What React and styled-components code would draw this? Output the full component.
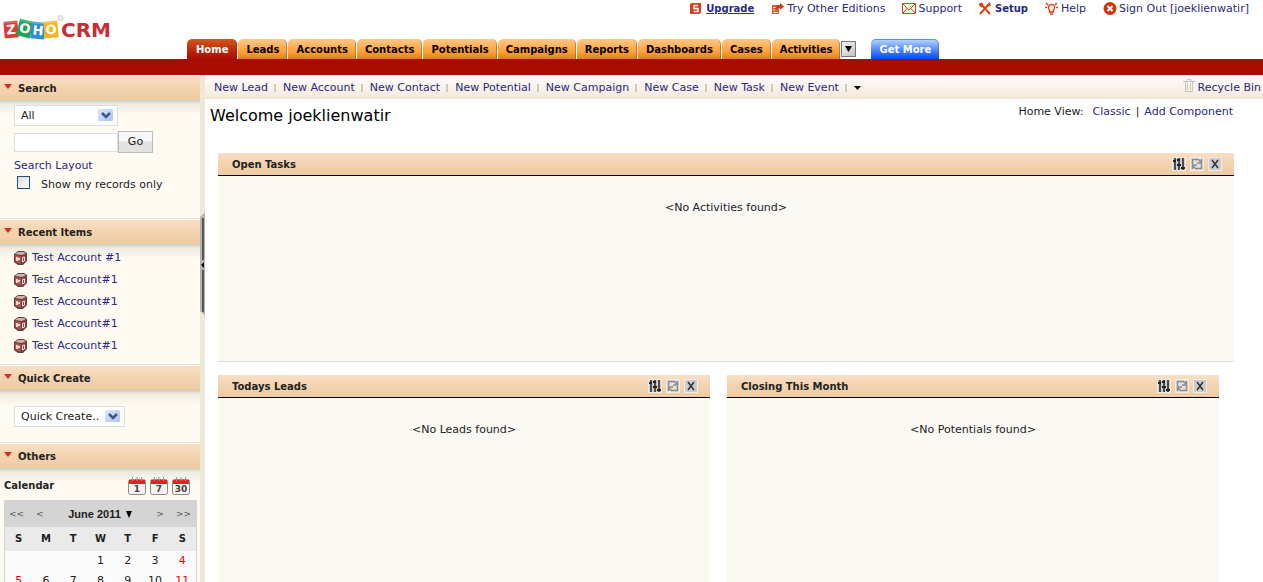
import React from "react";
import styled, { createGlobalStyle, css } from "styled-components";

const GlobalStyle = createGlobalStyle`
  * { box-sizing: border-box; }
  body {
    margin: 0;
    background: #fff;
    color: #222;
    font-family: "DejaVu Sans", Verdana, sans-serif;
    font-size: 11px;
    line-height: 14px;
  }
  button, input, select { font: inherit; color: inherit; margin: 0; }
  svg { display: block; flex: none; }
`;

const Page = styled.div`
  display: flex;
  flex-direction: column;
  height: 100vh;
  overflow: hidden;
`;

const TextLink = styled.a`
  color: #29297f;
  text-decoration: ${(p) => (p.$underline ? "underline" : "none")};
  white-space: nowrap;
  ${(p) => p.$bold && css`font-size: 10px; font-weight: bold;`}
`;

/* ---------- header ---------- */

const Header = styled.header`
  display: flex;
  flex: none;
  height: 75px;
  border-bottom: 16px solid #a90c03;
`;

const Brand = styled.a`
  flex: none;
  width: 187px;
  padding: 14px 0 0 3px;
`;

const HeaderMain = styled.div`
  flex: 1;
  display: flex;
  flex-direction: column;
  justify-content: space-between;
`;

const UserLinks = styled.nav`
  display: flex;
  justify-content: flex-end;
  gap: 17px;
  padding: 2px 14px 0 0;
`;

const UserItem = styled.div`
  display: flex;
  align-items: center;
`;

const IconSlot = styled.span`
  display: flex;
  width: 16px;
`;

const Tabs = styled.nav`
  display: flex;
  align-items: flex-end;
  gap: 1px;
`;

const tabColors = {
  normal: css`background: linear-gradient(#ffc88a, #ff9f35 65%, #d9831f); color: #000;`,
  active: css`
    background: linear-gradient(#d4571c, #b9270a 60%, #a90c03);
    color: #fff;
    padding: 0 8px 0 9px;
  `,
  blue: css`
    background: linear-gradient(#b4cfff, #5b92ff 45%, #0648f5);
    color: #fff;
    border-top: 1px solid #4f94ea;
    margin-left: 14px;
    line-height: 20px;
  `,
};

const Tab = styled.a`
  height: 20px;
  padding: 0 7px 0 8px;
  border-radius: 5px 5px 0 0;
  border-right: 1px solid rgba(110, 50, 0, 0.35);
  font-size: 10px;
  font-weight: bold;
  line-height: 22px;
  text-decoration: none;
  white-space: nowrap;
  ${(p) => tabColors[p.$tone || "normal"]}
`;

const MoreTabs = styled.button`
  display: flex;
  align-items: center;
  justify-content: center;
  width: 15px;
  height: 16px;
  margin-bottom: 2px;
  padding: 0;
  border: 1px solid #777;
  background: linear-gradient(135deg, #f4f4f4, #c4c4c4);
`;

/* ---------- sidebar ---------- */

const Body = styled.div`
  display: flex;
  flex: 1;
  min-height: 0;
`;

const Sidebar = styled.aside`
  flex: none;
  width: 200px;
  background: #fffaf2;
  overflow: hidden;
`;

const Section = styled.section`
  border-bottom: 1px solid #ebe5d8;
`;

const SectionTitle = styled.h2`
  display: flex;
  align-items: center;
  gap: 6px;
  height: 25px;
  margin: 0;
  padding: 2px 0 0 4px;
  border-top: 1px solid #fff;
  background: linear-gradient(#f9dfc6, #f3d3af 50%, #edcba2);
  font-size: 10px;
  font-weight: bold;
  svg { margin-bottom: 6px; }
`;

const SectionBody = styled.div`
  padding: ${(p) => p.$pad};
  background: linear-gradient(#cdc8bb, #efebe2 4px, #fffaf2 16px);
`;

const SearchForm = styled.form`
  display: flex;
  flex-direction: column;
  align-items: flex-start;
`;

const SearchRow = styled.div`
  display: flex;
  align-items: center;
  margin: 5px 0 6px;
`;

const Input = styled.input`
  width: 104px;
  height: 19px;
  border: 1px solid #dcdcdc;
  background: #fff;
`;

const GoButton = styled.button`
  width: 35px;
  height: 22px;
  padding: 0;
  border: 1px solid #bdbdbd;
  background: linear-gradient(#f7f7f7 45%, #e2e2e2 50%);
`;

const CheckRow = styled.label`
  display: flex;
  align-items: center;
  gap: 11px;
  margin: 3px 0 0 3px;
  line-height: 18px;
`;

const Checkbox = styled.input`
  appearance: none;
  width: 13px;
  height: 13px;
  border: 1px solid #1c5180;
  background: linear-gradient(135deg, #dcdcd7, #fff);
  align-self: flex-start;
`;

const SelectBox = styled.div`
  position: relative;
  width: ${(p) => p.$width};
  svg { position: absolute; top: 3px; right: 4px; pointer-events: none; }
`;

const Select = styled.select`
  appearance: none;
  display: block;
  width: 100%;
  height: 21px;
  padding: 0 0 0 6px;
  border: 1px solid #dcdcdc;
  border-radius: 0;
  background: #fff;
`;

const RecentList = styled.ul`
  display: flex;
  flex-direction: column;
  gap: 8px;
  margin: 0;
  padding: 0;
  list-style: none;
  li { display: flex; align-items: center; gap: 5px; }
`;

const CalendarBar = styled.div`
  display: flex;
  align-items: center;
  gap: 4px;
  margin-bottom: 5px;
  padding-right: 7px;
`;

const CalendarLabel = styled.h3`
  flex: 1;
  margin: 0;
  font-size: 10px;
`;

const IconButton = styled.button`
  display: block;
  padding: 0;
  border: 0;
  background: none;
`;

const Calendar = styled.div`
  border: 1px solid #d4d4d4;
  background: #fafafa;
`;

const MonthBar = styled.div`
  display: flex;
  align-items: center;
  height: 26px;
  padding: 0 5px 0 4px;
  gap: 12px;
  background: #d4d4d4;
  color: #555;
`;

const MonthButton = styled.button`
  flex: 1;
  display: flex;
  align-items: center;
  justify-content: center;
  gap: 5px;
  padding: 0;
  border: 0;
  background: none;
  color: #222;
  font-family: "Liberation Sans", Arial, sans-serif;
  font-weight: bold;
`;

const Step = styled.button`
  padding: 0;
  border: 0;
  background: none;
  font-size: 9px;
`;

const Days = styled.table`
  width: 100%;
  table-layout: fixed;
  border-collapse: collapse;
  text-align: center;
  th { height: 24px; padding: 0; background: #eaeaea; font-size: 10px; }
  td { height: 20px; padding: 0; }
`;

const Day = styled.td`
  color: ${(p) => (p.$weekend ? "#f00000" : "#222")};
`;

const Divider = styled.div`
  flex: none;
  width: 5px;
  padding-top: 137px;
  background: #efe7d7;
`;

/* ---------- main area ---------- */

const Main = styled.main`
  flex: 1;
  min-width: 0;
  display: flex;
  flex-direction: column;
`;

const Shortcuts = styled.nav`
  display: flex;
  align-items: center;
  height: 24px;
  padding: 2px 2px 0 9px;
  border-bottom: 1px solid #efe5d8;
  background: linear-gradient(#fffdfa, #f4e9dc);
`;

const Separator = styled.span`
  width: 2px;
  height: 8px;
  margin: 1px 7px 0 6px;
  background: #cfc8bc;
`;

const Recycle = styled.div`
  display: flex;
  align-items: center;
  gap: 3px;
  margin-left: auto;
  svg { margin-bottom: 4px; }
`;

const Heading = styled.div`
  display: flex;
  justify-content: space-between;
  align-items: flex-start;
  height: 54px;
  padding: 6px 30px 0 5px;
`;

const Title = styled.h1`
  margin: 0;
  color: #000;
  font-size: 16px;
  font-weight: normal;
  line-height: 22px;
`;

const ViewLinks = styled.div`
  display: flex;
  gap: 5px;
  span:first-child { margin-right: 4px; }
`;

const Panels = styled.div`
  flex: 1;
  min-height: 0;
  display: flex;
  flex-direction: column;
  gap: 13px;
  padding: 0 29px 0 13px;
`;

const PanelRow = styled.div`
  flex: 1;
  display: grid;
  grid-template-columns: 1fr 1fr;
  gap: 17px;
  padding-right: 15px;
`;

const PanelBox = styled.section`
  min-height: 209px;
  border-bottom: 1px solid #dcdcdc;
  background: #faf9f4;
`;

const PanelHeader = styled.header`
  display: flex;
  align-items: center;
  gap: 4px;
  height: 23px;
  padding: 0 12px 0 14px;
  border-bottom: 1px solid #000;
  background: linear-gradient(#f9dfc6, #f3d3af 50%, #edcba2);
`;

const PanelTitle = styled.h2`
  flex: 1;
  margin: 0;
  padding-top: 2px;
  font-size: 10px;
`;

const Empty = styled.p`
  margin: 0;
  padding-top: 25px;
  text-align: center;
`;

/* ---------- drawings ---------- */

const tiles = [
  { x: 1, y: 7, color: "#dd3a35", turn: -5, letter: "Z" },
  { x: 15, y: 6, color: "#22a457", turn: 14, letter: "O" },
  { x: 28, y: 8, color: "#2b8fd2", turn: 5, letter: "H" },
  { x: 41, y: 7, color: "#f3b41d", turn: -5, letter: "O" },
];

const Logo = () => (
  <svg width="124" height="28" viewBox="0 0 124 28" role="img" aria-label="Zoho CRM">
    {tiles.map((t) => (
      <g key={t.x} transform={`rotate(${t.turn} ${t.x + 7} ${t.y + 8})`}>
        <rect x={t.x} y={t.y} width="14" height="17" fill={t.color} />
        <path d={`M${t.x} ${t.y}h14v2h-14z`} fill="#fff" opacity=".25" />
        <text x={t.x + 7} y={t.y + 13} textAnchor="middle" fill="#fff" fontSize="13" fontWeight="bold" fontFamily="DejaVu Sans">{t.letter}</text>
      </g>
    ))}
    <circle cx="57.500" cy="4" r="2.500" fill="#eee" stroke="#ccc" strokeWidth="1" />
    <text x="58" y="23" fill="#c62f33" fontSize="20" fontWeight="bold" fontFamily="DejaVu Sans">CRM</text>
  </svg>
);

const UserIcon = ({ kind }) => (
  <svg width="14" height="14" viewBox="0 0 14 14" fill="none" stroke="#d9431c" strokeWidth="1.500">
    {kind === "upgrade" && (
      <>
        <path d="M0 2l2-1h9v10l-2 1H0z" fill="#d3421e" stroke="none" />
        <path d="M8 3.500H4v3h4v3H3.500" stroke="#fff" />
      </>
    )}
    {kind === "editions" && (
      <>
        <path d="M1 3h7v9H1z" fill="#e0592f" stroke="none" />
        <path d="M2.500 5.500h3M2.500 8h2M2.500 10.500h4" stroke="#fff" strokeWidth="1" />
        <path d="M4 9c0-4 2-6 5-6V1l4 3.500L9 8V6C7 6 5 6.500 4 9z" fill="#cf3a14" stroke="none" />
      </>
    )}
    {kind === "support" && (
      <>
        <path d="M.5 1.500h13v10H.5z" fill="#fff4ee" strokeWidth="1" />
        <path d="M1 2l6 6 6-6M1 11l4.500-5M13 11L8.500 6" strokeWidth="1" />
      </>
    )}
    {kind === "setup" && (
      <>
        <path d="M2 2l9 10" strokeWidth="2" />
        <path d="M11 1L1 12" strokeWidth="2" />
        <path d="M0 2l3-1 1 3-2 1zM8 2l2 2 2-1" strokeWidth="1" fill="#d9431c" />
      </>
    )}
    {kind === "help" && (
      <>
        <path d="M4.500 8C2.500 6 3 2.500 6.500 2.500S10.500 6 8.500 8v2h-4z" strokeWidth="1.500" fill="#fff4ee" />
        <path d="M5 12h3M0 5.500h2M11 5.500h2M1 1l2 2M12 1l-2 2" strokeWidth="1.500" />
      </>
    )}
    {kind === "signout" && (
      <>
        <circle cx="7" cy="6.500" r="6.500" fill="#cc3608" stroke="none" />
        <path d="M4.500 4l5 5M9.500 4l-5 5" stroke="#fff" strokeWidth="2" />
      </>
    )}
  </svg>
);

const Caret = ({ color = "#000", width = 7, height = 4 }) => (
  <svg width={width} height={height} viewBox="0 0 8 5" preserveAspectRatio="none" aria-hidden="true">
    <path d="M0 0h8L4 5z" fill={color} />
  </svg>
);

const SelectArrow = () => (
  <svg width="16" height="14" viewBox="0 0 16 14" aria-hidden="true">
    <defs>
      <linearGradient id="arrowFill" x1="0" y1="0" x2="1" y2="1">
        <stop offset="0" stopColor="#dbe5ff" />
        <stop offset="1" stopColor="#abc5fb" />
      </linearGradient>
    </defs>
    <rect x="0" y="1" width="15" height="12" rx="1" fill="url(#arrowFill)" />
    <path d="M4 5l4 4 4-4" fill="none" stroke="#42587f" strokeWidth="2.500" />
  </svg>
);

const AccountIcon = () => (
  <svg width="13" height="14" viewBox="0 0 13 14" aria-hidden="true">
    <path d="M0 3l4-3h6l3 2v8l-4 4H4l-4-3z" fill="#5a4340" />
    <path d="M1 3l3-2h6l2 1-4 2z" fill="#d6b0a8" />
    <path d="M1 4l6 1v8l-3-1-3-2z" fill="#b4524c" />
    <path d="M8 5l4-2v7l-4 3z" fill="#96403b" />
    <path d="M3 6v4M5 7v2" stroke="#fff" strokeWidth="1.500" />
    <path d="M8.500 6.500l2-.5v4l-2 1z" fill="none" stroke="#f4dcd8" strokeWidth="1" />
  </svg>
);

const CalendarIcon = ({ label }) => (
  <svg width="18" height="18" viewBox="0 0 18 18">
    <rect x=".5" y="2.500" width="17" height="15" rx="2" fill="#fbefef" stroke="#8a8a8a" />
    <path d="M1 3h16v4H1z" fill="#ee1c1c" />
    <path d="M4.500 0v4M9 0v4M13.500 0v4" stroke="#999" strokeWidth="1" />
    <text x="9" y="15" textAnchor="middle" fontSize="9" fontWeight="bold" fontFamily="DejaVu Sans" fill="#444">{label}</text>
  </svg>
);

const TrashIcon = () => (
  <svg width="12" height="13" viewBox="0 0 12 13" fill="none" stroke="#c4c4c4" aria-hidden="true">
    <path d="M0 2.500h12M4 2V.5h4V2M2.500 3v9.500h7V3M4.500 4v7M7.500 4v7" />
  </svg>
);

const PanelIcon = ({ kind }) => (
  <svg width="14" height="14" viewBox="0 0 14 14">
    <rect width="14" height="14" fill="#f1eee9" />
    <rect x="1" y="1" width="12" height="12" fill={kind === "refresh" ? "#e2e0dc" : "#ccc"} />
    {kind === "settings" && (
      <>
        <path d="M3 1v12M7 1v12M11 1v12" stroke="#222" strokeWidth="1.500" />
        <path d="M1 4h3M5 8h4M9 11h4M5 3h3" stroke="#222" strokeWidth="2" />
      </>
    )}
    {kind === "refresh" && (
      <path d="M2.500 7V2.500h6L11 5M11.500 7v4.500h-6L3 9M11.500 2v4H7M2.500 12V8H7" fill="none" stroke="#8a8a8a" strokeWidth="1.500" />
    )}
    {kind === "close" && <path d="M4 3l6 8M10 3l-6 8" stroke="#333" strokeWidth="1.500" />}
  </svg>
);

const CollapseHandle = () => (
  <svg width="5" height="104" viewBox="0 0 5 104">
    <path d="M0 5l5-5v104l-5-5z" fill="#b9b5a9" />
    <path d="M2 6h2v42H2zM2 58h2v42H2z" fill="#555" />
    <path d="M4 50v6L1 53z" fill="#000" />
  </svg>
);

/* ---------- data ---------- */

const userLinks = [
  { kind: "upgrade", text: "Upgrade", bold: true, underline: true },
  { kind: "editions", text: "Try Other Editions" },
  { kind: "support", text: "Support" },
  { kind: "setup", text: "Setup", bold: true },
  { kind: "help", text: "Help" },
  { kind: "signout", text: "Sign Out [joeklienwatir]" },
];
const tabs = ["Leads", "Accounts", "Contacts", "Potentials", "Campaigns", "Reports", "Dashboards", "Cases", "Activities"];
const shortcuts = ["Lead", "Account", "Contact", "Potential", "Campaign", "Case", "Task", "Event"];
const recent = ["Test Account #1", "Test Account#1", "Test Account#1", "Test Account#1", "Test Account#1"];
const weeks = [
  ["", "", "", 1, 2, 3, 4],
  [5, 6, 7, 8, 9, 10, 11],
];

function SidebarSection({ title, pad, children }) {
  return (
    <Section>
      <SectionTitle>
        <Caret color="#c8322a" width={8} height={5} />
        {title}
      </SectionTitle>
      <SectionBody $pad={pad}>{children}</SectionBody>
    </Section>
  );
}

function Panel({ title, message }) {
  return (
    <PanelBox>
      <PanelHeader>
        <PanelTitle>{title}</PanelTitle>
        <IconButton aria-label="Settings"><PanelIcon kind="settings" /></IconButton>
        <IconButton aria-label="Refresh"><PanelIcon kind="refresh" /></IconButton>
        <IconButton aria-label="Close"><PanelIcon kind="close" /></IconButton>
      </PanelHeader>
      <Empty>{message}</Empty>
    </PanelBox>
  );
}

export default function App() {
  return (
    <Page>
      <GlobalStyle />
      <Header>
        <Brand href="#"><Logo /></Brand>
        <HeaderMain>
          <UserLinks>
            {userLinks.map((l) => (
              <UserItem key={l.kind}>
                <IconSlot><UserIcon kind={l.kind} /></IconSlot>
                <TextLink href="#" $bold={l.bold} $underline={l.underline}>{l.text}</TextLink>
              </UserItem>
            ))}
          </UserLinks>
          <Tabs>
            <Tab href="#" $tone="active">Home</Tab>
            {tabs.map((t) => <Tab href="#" key={t}>{t}</Tab>)}
            <MoreTabs aria-label="More tabs"><Caret width={7} height={6} /></MoreTabs>
            <Tab href="#" $tone="blue">Get More</Tab>
          </Tabs>
        </HeaderMain>
      </Header>
      <Body>
        <Sidebar>
          <SidebarSection title="Search" pad="5px 14px 24px">
            <SearchForm>
              <SelectBox $width="104px">
                <Select aria-label="Search in"><option>All</option></Select>
                <SelectArrow />
              </SelectBox>
              <SearchRow>
                <Input type="text" aria-label="Search text" />
                <GoButton type="button">Go</GoButton>
              </SearchRow>
              <TextLink href="#">Search Layout</TextLink>
              <CheckRow>
                <Checkbox type="checkbox" />
                Show my records only
              </CheckRow>
            </SearchForm>
          </SidebarSection>
          <SidebarSection title="Recent Items" pad="7px 14px 11px">
            <RecentList>
              {recent.map((r, i) => (
                <li key={i}><AccountIcon /><TextLink href="#">{r}</TextLink></li>
              ))}
            </RecentList>
          </SidebarSection>
          <SidebarSection title="Quick Create" pad="16px 14px 15px">
            <SelectBox $width="111px">
              <Select aria-label="Quick create"><option>Quick Create..</option></Select>
              <SelectArrow />
            </SelectBox>
          </SidebarSection>
          <SidebarSection title="Others" pad="9px 3px 12px 4px">
            <CalendarBar>
              <CalendarLabel>Calendar</CalendarLabel>
              <IconButton aria-label="Day view"><CalendarIcon label="1" /></IconButton>
              <IconButton aria-label="Week view"><CalendarIcon label="7" /></IconButton>
              <IconButton aria-label="Month view"><CalendarIcon label="30" /></IconButton>
            </CalendarBar>
            <Calendar>
              <MonthBar>
                <Step>&lt;&lt;</Step>
                <Step>&lt;</Step>
                <MonthButton>June 2011 <Caret width={6} height={7} /></MonthButton>
                <Step>&gt;</Step>
                <Step>&gt;&gt;</Step>
              </MonthBar>
              <Days>
                <thead>
                  <tr>{["S", "M", "T", "W", "T", "F", "S"].map((d, i) => <th key={i}>{d}</th>)}</tr>
                </thead>
                <tbody>
                  {weeks.map((week, i) => (
                    <tr key={i}>
                      {week.map((d, j) => <Day key={j} $weekend={j === 0 || j === 6}>{d}</Day>)}
                    </tr>
                  ))}
                </tbody>
              </Days>
            </Calendar>
          </SidebarSection>
        </Sidebar>
        <Divider>
          <IconButton aria-label="Collapse sidebar"><CollapseHandle /></IconButton>
        </Divider>
        <Main>
          <Shortcuts>
            {shortcuts.map((s) => (
              <React.Fragment key={s}>
                <TextLink href="#">New {s}</TextLink>
                <Separator />
              </React.Fragment>
            ))}
            <IconButton aria-label="More shortcuts"><Caret width={7} height={4} /></IconButton>
            <Recycle>
              <TrashIcon />
              <TextLink href="#">Recycle Bin</TextLink>
            </Recycle>
          </Shortcuts>
          <Heading>
            <Title>Welcome joeklienwatir</Title>
            <ViewLinks>
              <span>Home View:</span>
              <TextLink href="#">Classic</TextLink>
              <span>|</span>
              <TextLink href="#">Add Component</TextLink>
            </ViewLinks>
          </Heading>
          <Panels>
            <Panel title="Open Tasks" message="<No Activities found>" />
            <PanelRow>
              <Panel title="Todays Leads" message="<No Leads found>" />
              <Panel title="Closing This Month" message="<No Potentials found>" />
            </PanelRow>
          </Panels>
        </Main>
      </Body>
    </Page>
  );
}
